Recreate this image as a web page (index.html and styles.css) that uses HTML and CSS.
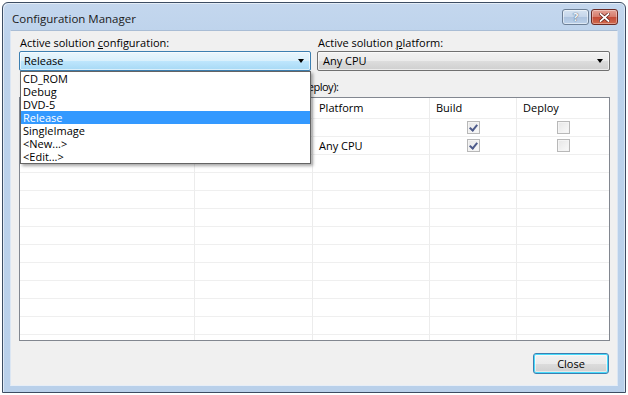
FILE: index.html
```html
<!DOCTYPE html>
<html>
<head>
<meta charset="utf-8">
<title>Configuration Manager</title>
<link rel="stylesheet" href="styles.css">
</head>
<body>
<div class="window">
  <div class="titlebar">
    <span class="title">Configuration Manager</span>
    <div class="caption-buttons">
      <div class="cap cap-help">?</div>
      <div class="cap cap-close">
        <svg width="11" height="9" viewBox="0 0 11 9"><path d="M1.5 1 L9.5 8 M9.5 1 L1.5 8" stroke="#5a1a14" stroke-width="3.2" stroke-linecap="square"/><path d="M1.5 1 L9.5 8 M9.5 1 L1.5 8" stroke="#ffffff" stroke-width="1.8" stroke-linecap="square"/></svg>
      </div>
    </div>
  </div>
  <div class="client">
    <div class="selectors">
      <div class="field">
        <div class="label">Active solution <u>c</u>onfiguration:</div>
        <div class="combo-wrap">
          <div class="combo combo-active">
            <span class="combo-text">Release</span>
            <span class="arrow"></span>
          </div>
          <ul class="dropdown">
            <li>CD_ROM</li>
            <li>Debug</li>
            <li>DVD-5</li>
            <li class="selected">Release</li>
            <li>SingleImage</li>
            <li>&lt;New...&gt;</li>
            <li>&lt;Edit...&gt;</li>
          </ul>
        </div>
      </div>
      <div class="field">
        <div class="label">Active solution <u>p</u>latform:</div>
        <div class="combo-wrap">
          <div class="combo">
            <span class="combo-text">Any CPU</span>
            <span class="arrow"></span>
          </div>
        </div>
      </div>
    </div>
    <div class="label contexts">Project contexts (check the project configurations to build or deploy):</div>
    <div class="grid">
      <div class="cell head"></div>
      <div class="cell head"></div>
      <div class="cell head">Platform</div>
      <div class="cell head">Build</div>
      <div class="cell head last">Deploy</div>

      <div class="cell"></div>
      <div class="cell"></div>
      <div class="cell"></div>
      <div class="cell center"><span class="check checked"></span></div>
      <div class="cell center last"><span class="check"></span></div>

      <div class="cell"></div>
      <div class="cell"></div>
      <div class="cell">Any CPU</div>
      <div class="cell center"><span class="check checked"></span></div>
      <div class="cell center last"><span class="check"></span></div>

      <div class="cell"></div><div class="cell"></div><div class="cell"></div><div class="cell"></div><div class="cell last"></div>
      <div class="cell"></div><div class="cell"></div><div class="cell"></div><div class="cell"></div><div class="cell last"></div>
      <div class="cell"></div><div class="cell"></div><div class="cell"></div><div class="cell"></div><div class="cell last"></div>
      <div class="cell"></div><div class="cell"></div><div class="cell"></div><div class="cell"></div><div class="cell last"></div>
      <div class="cell"></div><div class="cell"></div><div class="cell"></div><div class="cell"></div><div class="cell last"></div>
      <div class="cell"></div><div class="cell"></div><div class="cell"></div><div class="cell"></div><div class="cell last"></div>
      <div class="cell"></div><div class="cell"></div><div class="cell"></div><div class="cell"></div><div class="cell last"></div>
      <div class="cell"></div><div class="cell"></div><div class="cell"></div><div class="cell"></div><div class="cell last"></div>
      <div class="cell"></div><div class="cell"></div><div class="cell"></div><div class="cell"></div><div class="cell last"></div>
      <div class="cell"></div><div class="cell"></div><div class="cell"></div><div class="cell"></div><div class="cell last"></div>
      <div class="cell"></div><div class="cell"></div><div class="cell"></div><div class="cell"></div><div class="cell last"></div>
    </div>
    <div class="footer">
      <button class="btn">Close</button>
    </div>
  </div>
</div>
</body>
</html>
```

FILE: styles.css
```css
* { box-sizing: border-box; }
html, body { margin: 0; padding: 0; }
body {
  width: 628px;
  height: 395px;
  overflow: hidden;
  background: #ffffff;
  font-family: "Open Sans", "Noto Sans", sans-serif;
  font-size: 11px;
  color: #000;
}
.window {
  margin: 2px 0 0 2px;
  width: 624px;
  height: 391px;
  border: 1px solid #3c4d63;
  border-radius: 6px 6px 0 0;
  background: linear-gradient(to bottom, #c4d7ee 0px, #bcd2eb 40px, #b9d0ea 100%);
  box-shadow: inset 1px 1px 0 rgba(255,255,255,0.55), inset -1px 0 0 rgba(255,255,255,0.45);
  display: flex;
  flex-direction: column;
}
.titlebar {
  height: 27px;
  display: flex;
  align-items: flex-start;
  padding: 0 7px 0 9px;
}
.title {
  flex: 1;
  font-size: 11.5px;
  line-height: 15px;
  padding-top: 8px;
  color: #1a1a1a;
}
.caption-buttons {
  display: flex;
  gap: 2px;
  margin-top: 6px;
}
.cap {
  width: 27px;
  height: 16px;
  border: 1px solid #6d7f95;
  border-radius: 3px;
  display: flex;
  align-items: center;
  justify-content: center;
}
.cap-help {
  background: linear-gradient(to bottom, #d6e3f1 0%, #c4d5ea 50%, #adc3de 51%, #bcd1ea 100%);
  color: #f4f8fc;
  font-weight: bold;
  font-size: 11px;
  line-height: 12px;
  text-shadow: 0 0 1px #4c6078, 0 0 1px #4c6078;
  box-shadow: inset 0 0 0 1px rgba(255,255,255,0.5);
}
.cap-close {
  border-color: #6b2a24;
  background: linear-gradient(to bottom, #e4a195 0%, #d67b6b 50%, #c44a36 51%, #d06a4f 100%);
  box-shadow: inset 0 0 0 1px rgba(255,255,255,0.35);
}
.client {
  margin: 0 7px;
  height: 356px;
  border: 1px solid #dbe6f3;
  border-top-color: #a9bdd5;
  border-bottom-color: #e7eef7;
  background: #f0f0f0;
  padding: 4px 7px 0 8px;
  display: flex;
  flex-direction: column;
}
.selectors {
  display: grid;
  grid-template-columns: 292px 293px;
  column-gap: 6px;
}
.label {
  line-height: 15px;
  height: 15px;
  margin-bottom: 1px;
  padding-left: 1px;
  white-space: nowrap;
  color: #000;
}
.label u { text-decoration: underline; text-underline-offset: 1px; }
.combo-wrap { position: relative; }
.combo {
  height: 20px;
  border: 1px solid #707070;
  border-radius: 2px;
  background: linear-gradient(to bottom, #f2f2f2 0%, #ebebeb 50%, #dddddd 51%, #cfcfcf 100%);
  box-shadow: inset 0 0 0 1px rgba(255,255,255,0.6);
  display: flex;
  align-items: center;
  padding: 0 5px;
}
.combo-active {
  border-color: #3c7fb1;
  background: linear-gradient(to bottom, #eaf6fd 0%, #d9f0fc 50%, #bee6fd 51%, #a7d9f5 100%);
  padding-left: 4px;
}
.combo-text { flex: 1; line-height: 16px; }
.arrow {
  width: 0;
  height: 0;
  border-left: 3.5px solid transparent;
  border-right: 3.5px solid transparent;
  border-top: 4px solid #000;
  margin-right: 1px;
}
.dropdown {
  position: absolute;
  top: 20px;
  left: 1px;
  width: 291px;
  margin: 0;
  padding: 0;
  list-style: none;
  background: #fff;
  border: 1px solid #646464;
  box-shadow: 2px 2px 3px rgba(0,0,0,0.35);
  z-index: 10;
}
.dropdown li {
  height: 13px;
  line-height: 13px;
  padding-left: 2px;
  white-space: nowrap;
}
.dropdown li.selected {
  background: #3399ff;
  color: #fff;
}
.contexts {
  margin-top: 8px;
  margin-bottom: 2px;
  letter-spacing: -0.48px;
}
.grid {
  margin-top: 1px;
  width: 591px;
  height: 244px;
  border: 1px solid #828790;
  background: #fff;
  overflow: hidden;
  display: grid;
  grid-template-columns: 175px 118px 117px 87px 92px;
  grid-template-rows: 21px;
  grid-auto-rows: 18px;
}
.cell {
  border-right: 1px solid #ececec;
  border-bottom: 1px solid #efefef;
  padding-left: 6px;
  line-height: 17px;
  white-space: nowrap;
  overflow: hidden;
}
.cell.last { border-right: none; }
.cell.head { line-height: 20px; }
.cell.center {
  padding-left: 0;
  display: flex;
  align-items: center;
  justify-content: center;
}
.check {
  width: 13px;
  height: 13px;
  border: 1px solid #b8b8b8;
  background: linear-gradient(135deg, #e6e6e6, #fafafa);
  box-shadow: inset 0 0 0 1px #f4f4f4;
  position: relative;
}
.check.checked::after {
  content: "";
  position: absolute;
  left: 3px;
  top: 1px;
  width: 3px;
  height: 6px;
  border-right: 2px solid #4d5a8a;
  border-bottom: 2px solid #4d5a8a;
  transform: rotate(40deg);
}
.footer {
  display: flex;
  justify-content: flex-end;
  padding-top: 12px;
  padding-right: 1px;
}
.btn {
  width: 76px;
  height: 21px;
  font-family: inherit;
  font-size: 11px;
  color: #000;
  border: 1px solid #3c7fb1;
  border-radius: 3px;
  background: linear-gradient(to bottom, #f2f2f2 0%, #ebebeb 50%, #dddddd 51%, #cfcfcf 100%);
  box-shadow: inset 0 0 0 1px #48dbfb, inset 0 0 0 2px rgba(255,255,255,0.5);
  padding: 0;
}
```
